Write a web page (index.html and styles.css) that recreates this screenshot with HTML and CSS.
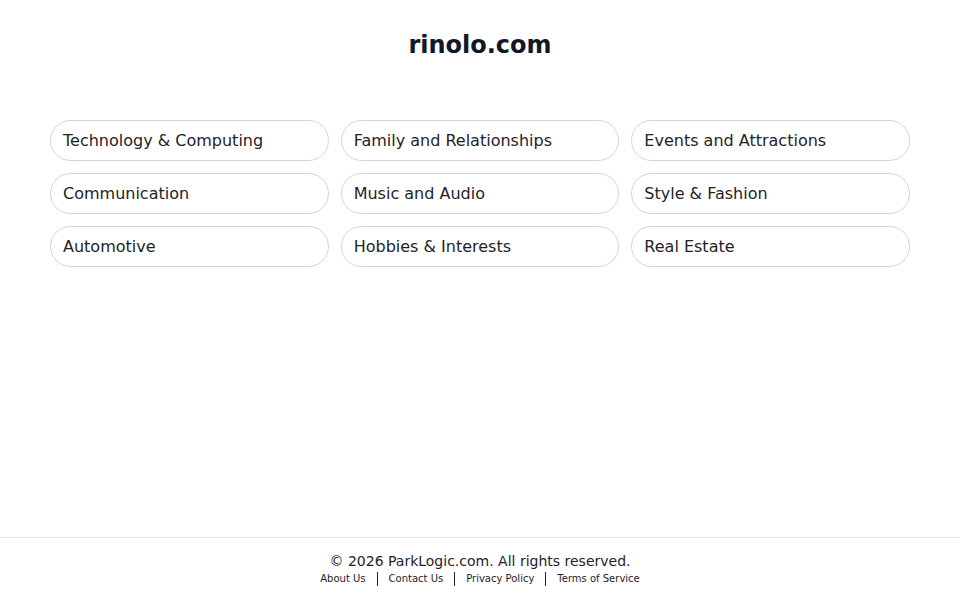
FILE: index.html
```html
<!DOCTYPE html>
<html>
<head>
  <meta charset="UTF-8">
  <title>rinolo.com</title>
  <link rel="stylesheet" href="styles.css">
</head>
<body>
  <!-- header -->
  <div class="header">
    <h1 class="domain">rinolo.com</h1>
  </div>

  <!-- related links -->
  <div class="main">
    <div class="link-grid">
      <a class="link-item" href="#">Technology &amp; Computing</a>
      <a class="link-item" href="#">Family and Relationships</a>
      <a class="link-item" href="#">Events and Attractions</a>
      <a class="link-item" href="#">Communication</a>
      <a class="link-item" href="#">Music and Audio</a>
      <a class="link-item" href="#">Style &amp; Fashion</a>
      <a class="link-item" href="#">Automotive</a>
      <a class="link-item" href="#">Hobbies &amp; Interests</a>
      <a class="link-item" href="#">Real Estate</a>
    </div>
  </div>

  <!-- footer -->
  <div class="footer">
    <div class="copyright">© 2026 ParkLogic.com. All rights reserved.</div>
    <div class="footer-links">
      <a href="#">About Us</a>
      <span class="sep"></span>
      <a href="#">Contact Us</a>
      <span class="sep"></span>
      <a href="#">Privacy Policy</a>
      <span class="sep"></span>
      <a href="#">Terms of Service</a>
    </div>
  </div>
</body>
</html>
```

FILE: styles.css
```css
body {
  margin: 0;
  padding: 0;
  font-family: "DejaVu Sans", Verdana, sans-serif;
  color: #111827;
  background-color: #fff;
  display: flex;
  flex-direction: column;
  min-height: 100vh;
}

/* header */
.header {
  padding-top: 31px;
  text-align: center;
}

.domain {
  margin: 0;
  font-size: 24px;
  line-height: 28px;
  font-weight: bold;
}

/* links */
.main {
  flex: 1;
  padding: 61px 50px 0;
}

.link-grid {
  display: grid;
  grid-template-columns: repeat(3, 1fr);
  gap: 12px;
}

.link-item {
  display: block;
  height: 39px;
  line-height: 39px;
  padding: 0 12px;
  border: 1px solid #d1d5db;
  border-radius: 21px;
  color: #1f2328;
  font-size: 16px;
  text-decoration: none;
  white-space: nowrap;
}

/* footer */
.footer {
  border-top: 1px solid #e5e7eb;
  padding: 15px 0 14px;
  text-align: center;
}

.copyright {
  font-size: 14px;
  line-height: 17px;
  color: #1f2328;
}

.footer-links {
  display: flex;
  justify-content: center;
  align-items: center;
  margin-top: 1px;
  font-size: 10px;
  line-height: 15px;
}

.footer-links a {
  color: #1f2328;
  text-decoration: none;
}

.sep {
  width: 1px;
  height: 14px;
  margin: 0 11px;
  background-color: #1f2328;
}
```
